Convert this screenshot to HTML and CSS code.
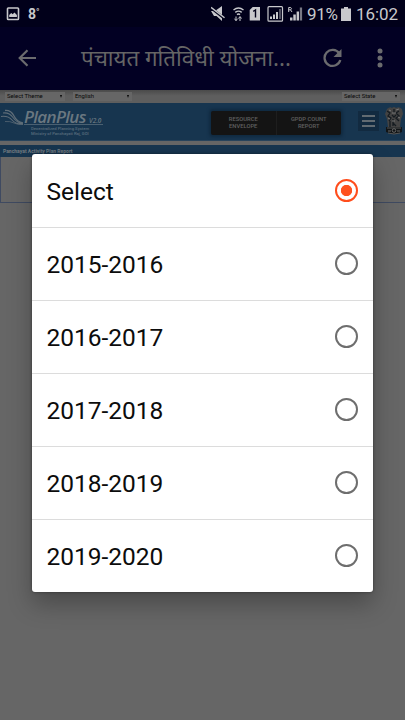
FILE: index.html
```html
<!DOCTYPE html>
<html lang="hi">
<head>
<meta charset="utf-8">
<title>PlanPlus</title>
<link rel="stylesheet" href="styles.css">
</head>
<body>
<header class="status">
  <svg class="status-left" width="14" height="14" viewBox="0 0 14 14"><rect x="1.5" y="1" width="11" height="11.5" rx=".8" fill="none" stroke="currentColor" stroke-width="1.6"/><path d="M3.2 10V8l2-2 1.5 1.2 1.8-1.8L10.9 8v2z" fill="currentColor"/></svg>
  <span class="temp">8<sup>°</sup></span>
  <svg class="status-icons" width="95" height="20" viewBox="0 0 95 20" fill="currentColor">
    <path d="M0 7h4l7-5v15l-5.500-5H3z"/><path d="M-1 3l15 12" stroke="#01001a" stroke-width="2.6"/><path d="M0 3.300l13.500 10.400" stroke="currentColor" stroke-width="1.4"/>
    <path d="M22.500 6q5-4 10 0M24.300 8.400q3.200-2.600 6.400 0M26 10.600q1.500-1.200 3 0" fill="none" stroke="currentColor" stroke-width="1.4"/><path d="M25 12.500v4M23.500 14.700l1.500 2 1.500-2M29 17v-4M27.500 14.500L29 12.500l1.500 2" stroke="currentColor" fill="none"/>
    <path d="M38.700 6l3-3h7.300v13.500H38.700z"/><path d="M42.200 7.400L44.500 6v7.500" fill="none" stroke="#01001a" stroke-width="1.4"/>
    <rect x="57" y="2.700" width="14.500" height="14.500" rx="1" fill="none" stroke="currentColor" stroke-width="1.2"/><path d="M59 12.500h2V15h-2zm3-2h2V15h-2zm3-2.500h2v7h-2z"/><path d="M68 5h2v10h-2z" opacity=".4"/>
    <path d="M79 13.500h2.500v3H79zm3.300-3h2.500v6h-2.500zm3.300-3H88v9h-2.400z"/><path d="M88.800 3.500h2.300v13h-2.300z" opacity=".6"/><path d="M77.700 8V3.500h2q1.600 1.200 0 2.300h-2m1.800 0L81 8" fill="none" stroke="currentColor"/>
  </svg>
  <span class="percent">91%</span>
  <svg class="battery" width="10" height="14" viewBox="0 0 10 14"><path d="M3 0h4v1.500h3V14H0V1.500h3z" fill="currentColor"/></svg>
  <span class="clock">16:02</span>
</header>
<nav class="appbar">
  <svg class="back" width="20" height="18" viewBox="0 0 20 18"><path d="M18 9H2M9.500 1.200L1.700 9l7.800 7.800" fill="none" stroke="currentColor" stroke-width="2.2"/></svg>
  <h1>पंचायत गतिविधी योजना...</h1>
  <svg class="reload" width="20" height="20" viewBox="0 0 20 20"><path d="M16.200 5.400A8 8 0 1 0 17.300 12" fill="none" stroke="currentColor" stroke-width="2.3"/><path d="M18.500 1v8h-8z" fill="currentColor"/></svg>
  <svg class="more" width="6" height="20" viewBox="0 0 6 20" fill="currentColor"><circle cx="3" cy="3" r="2.500"/><circle cx="3" cy="10" r="2.500"/><circle cx="3" cy="17" r="2.500"/></svg>
</nav>
<main class="page">
  <div class="selects"><span class="theme">Select Theme<i></i></span><span class="language">English<i></i></span><span class="state">Select State<i></i></span></div>
  <div class="banner">
    <svg class="waves" width="23" height="18" viewBox="0 0 23 18" fill="none" stroke="currentColor"><path d="M5 1.500Q11 1 14 7t9 7" stroke-width="1.300"/><path d="M3 4q6-1 10 4.500T23 14.500M1 7.500q7-1 11 3.500t11 4" stroke-width="1.100"/><path d="M5 12.500q5-.5 9 1.500t9 1.500" stroke-width=".7"/></svg>
    <div class="brand"><div class="name"><span>PlanPlus</span><small>V2.0</small></div><div class="tagline"><div>Decentralized Planning System</div><div>Ministry of Panchayati Raj, GOI</div></div></div>
    <div class="actions"><span>RESOURCE<br>ENVELOPE</span><span>GPDP COUNT<br>REPORT</span></div>
    <div class="menu"><b></b><b></b><b></b></div>
    <svg class="emblem" width="20" height="30" viewBox="0 0 20 30"><path d="M3 3q3-3 5-1 2-2 4 0 3-2 6 1l1 5-2 5-1 8H4L3 13 1 8z" fill="#434343"/><path d="M3 5l3 2-2 3 3 2-2 3m5-12v4m-2 2l2 2 2-2m-3 4v7m6-15l-3 2 3 3-3 2 3 3M6 15v6m3-4l3 3" fill="none" stroke="#151b20" stroke-width="1.3"/><path d="M5 4l2 1m5-1l3-1M8 7h4m-8 5l2 1m8-2l2 1m-8 3h3" stroke="#777"/><path d="M2 21h16v5q-8 4-16 0z" fill="#111416"/><path d="M3 22h14M4 27q6 2 12 0" stroke="#555" fill="none"/><circle cx="10" cy="24.500" r="1.800" fill="none" stroke="#666"/><path d="M4 25h3m6 0h3" stroke="#666"/></svg>
  </div>
  <section class="report"><h2>Panchayat Activity Plan Report</h2></section>
</main>
<div class="dialog" role="dialog">
  <div class="option"><span>Select</span><i class="radio checked"></i></div>
  <div class="option"><span>2015-2016</span><i class="radio"></i></div>
  <div class="option"><span>2016-2017</span><i class="radio"></i></div>
  <div class="option"><span>2017-2018</span><i class="radio"></i></div>
  <div class="option"><span>2018-2019</span><i class="radio"></i></div>
  <div class="option"><span>2019-2020</span><i class="radio"></i></div>
</div>
</body>
</html>
```
FILE: styles.css
```css
* { box-sizing: border-box; }
body { margin: 0; width: 405px; height: 720px; overflow: hidden; background: #666; font-family: Roboto, "Noto Sans", sans-serif; position: relative; }
svg { display: block; flex: none; }
.status { height: 27px; background: #01001a; color: #c8c8cc; display: flex; align-items: center; white-space: nowrap; }
.status-left { margin-left: 6px; }
.temp { margin-left: 8px; width: 20px; font-weight: 700; font-size: 14px; line-height: 20px; }
.temp sup { font-size: 9px; line-height: 0; vertical-align: 4px; }
.status-icons { margin-left: 163px; margin-top: 0; }
.percent { margin-left: 1px; width: 34px; font-size: 17px; letter-spacing: -.25px; }
.clock { margin-left: 5px; font-size: 17px; letter-spacing: -.1px; }
.appbar { height: 63px; background: #020023; color: #6b6b6e; display: flex; align-items: center; padding-bottom: 1px; }
.back { margin-left: 18px; }
.appbar h1 { margin: 0 0 0 43px; width: 214px; font: 400 22.3px/40px "Noto Sans", sans-serif; white-space: nowrap; color: #656565; }
.reload { margin-left: 28px; }
.more { margin-left: 34px; }
.page { height: 630px; background: #666; }
.selects { height: 13px; background: linear-gradient(#4a4a4a, #5e5e5e 45%); display: flex; align-items: flex-start; padding-top: 2px; font-size: 5.9px; line-height: 9px; color: #080808; }
.selects span { display: flex; align-items: center; justify-content: space-between; height: 9px; background: #666; padding: 0 3px 0 2px; white-space: nowrap; }
.selects i { border: 1.2px solid transparent; border-top: 3px solid #080808; border-bottom: 0; }
.theme { margin-left: 5px; width: 60px; }
.language { margin-left: 8px; width: 59px; }
.state { margin-left: 210px; width: 58px; }
.banner { height: 38px; background: #17354f; display: flex; align-items: flex-start; border-bottom: 1px solid #28445c; }
.waves { margin: 6px 0 0; color: #5f6d78; }
.brand { width: 187px; color: #6a7780; padding-top: 6px; }
.name { margin-left: 1px; width: 79px; height: 16px; border-bottom: 1px solid #4a6071; display: flex; align-items: baseline; font: italic 600 17px/15px "Open Sans", sans-serif; letter-spacing: -.65px; white-space: nowrap; }
.name span { width: 65px; }
.name small { font-size: 6.4px; line-height: 8px; letter-spacing: 0; }
.tagline { padding: 1px 0 0 8px; color: #596d7d; font-size: 4.2px; line-height: 5px; font-weight: 500; white-space: nowrap; }
.actions { margin-top: 8px; margin-left: 1px; width: 130px; height: 24px; background: #141414; border-radius: 2px; box-shadow: 0 0 3px 2px #102a40; display: flex; align-items: center; text-align: center; font-size: 5.8px; line-height: 7px; font-weight: 500; color: #606060; }
.actions span { flex: 1; height: 24px; padding-top: 5px; }
.actions span + span { border-left: 1px solid #1e1e1e; }
.menu { margin: 8px 0 0 17px; width: 21px; height: 20px; background: #122a40; padding: 4px; display: flex; flex-direction: column; justify-content: space-between; }
.menu b { height: 2px; background: #626b72; }
.emblem { margin: 3px 0 0 5px; }
.report { margin-top: 4px; height: 58px; border: 1px solid #3f4a61; border-top: 0; border-right: 0; }
.report h2 { margin: 0 0 0 -1px; height: 12px; background: #17354f; padding: 1px 0 0 3px; font-size: 5px; line-height: 10px; color: #737b80; white-space: nowrap; }
.dialog { position: absolute; left: 32.4px; top: 154px; width: 340.3px; height: 438px; background: #fff; border-radius: 3px; overflow: hidden; box-shadow: 0 12px 24px rgba(0,0,0,.28), 0 0 3px rgba(0,0,0,.4); }
.option { height: 73px; padding: 2px 14.5px 0 14px; display: flex; align-items: center; justify-content: space-between; color: #0c0c0c; font-size: 24.5px; }
.option + .option { border-top: 1px solid #dcdcdc; padding-top: 0; }
.option + .option .radio { margin-top: -1px; }
.radio { width: 23px; height: 23px; border: 2px solid #6e6e6e; border-radius: 50%; margin-top: -3px; }
.radio.checked { border-color: #ff4d1c; background: radial-gradient(circle, #ff511f 5.3px, #fff 6px); }
```
